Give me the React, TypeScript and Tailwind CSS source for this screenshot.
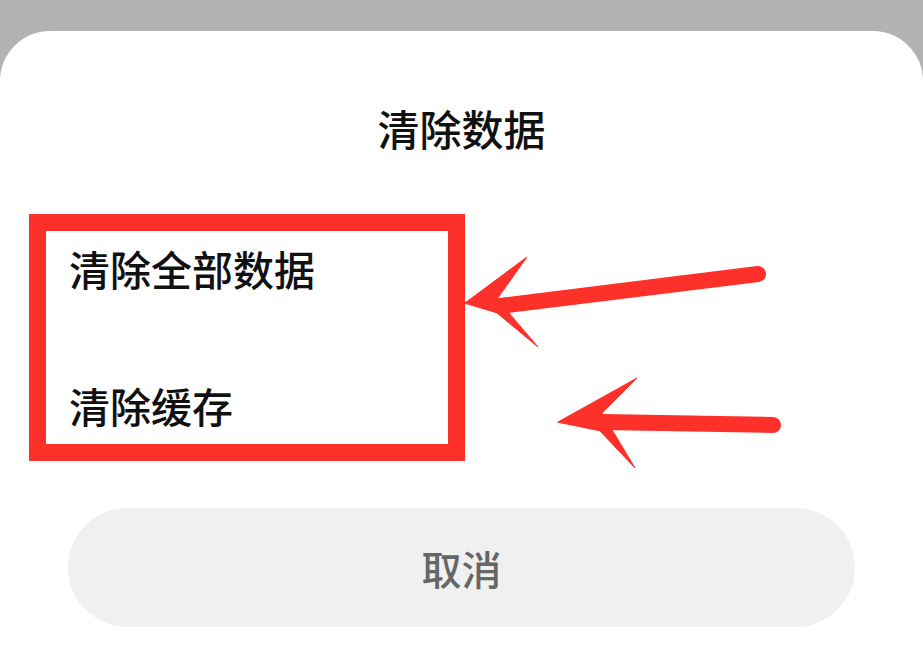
const FONT = { fontFamily: '"Noto Sans CJK SC", "Noto Sans", sans-serif' };

function Arrows() {
  return (
    <svg className="pointer-events-none absolute inset-0" width="923" height="648" viewBox="0 0 923 648">
      <g fill="#fe302a" stroke="#fe302a" strokeLinecap="round" strokeLinejoin="round">
        <line x1="500" y1="306" x2="758" y2="274" strokeWidth="16" />
        <polygon points="465,303 527,257 497,299 538,347 497,313" strokeWidth="1" />
        <line x1="603" y1="422" x2="773" y2="425" strokeWidth="16" />
        <polygon points="558,422 637,378 602,413 635,468 600,431" strokeWidth="1" />
      </g>
    </svg>
  );
}

export default function App() {
  return (
    <div className="relative h-[648px] w-[923px] overflow-hidden bg-[#b3b3b3] pt-[31px]" style={FONT}>
      <div className="flex h-full flex-col rounded-t-[50px] bg-white">
        {/* Title */}
        <div className="mt-[57px] h-[80px] text-center text-[42px] font-medium leading-[80px] text-[#111]">
          清除数据
        </div>

        {/* Highlighted options */}
        <div className="ml-[29px] mt-[46px] flex h-[247px] w-[436px] flex-col gap-[97px] border-[17px] border-[#fe302a] pl-[23px] pt-[17px]">
          <div className="text-[41px] font-medium leading-[40px] text-[#111]">清除全部数据</div>
          <div className="text-[41px] font-medium leading-[40px] text-[#111]">清除缓存</div>
        </div>

        {/* Cancel */}
        <div className="ml-[68px] mt-[47px] flex h-[119px] w-[787px] items-center justify-center rounded-full bg-[#f0f0f0] text-[40px] font-medium text-[#666]">
          取消
        </div>
      </div>
      <Arrows />
    </div>
  );
}
